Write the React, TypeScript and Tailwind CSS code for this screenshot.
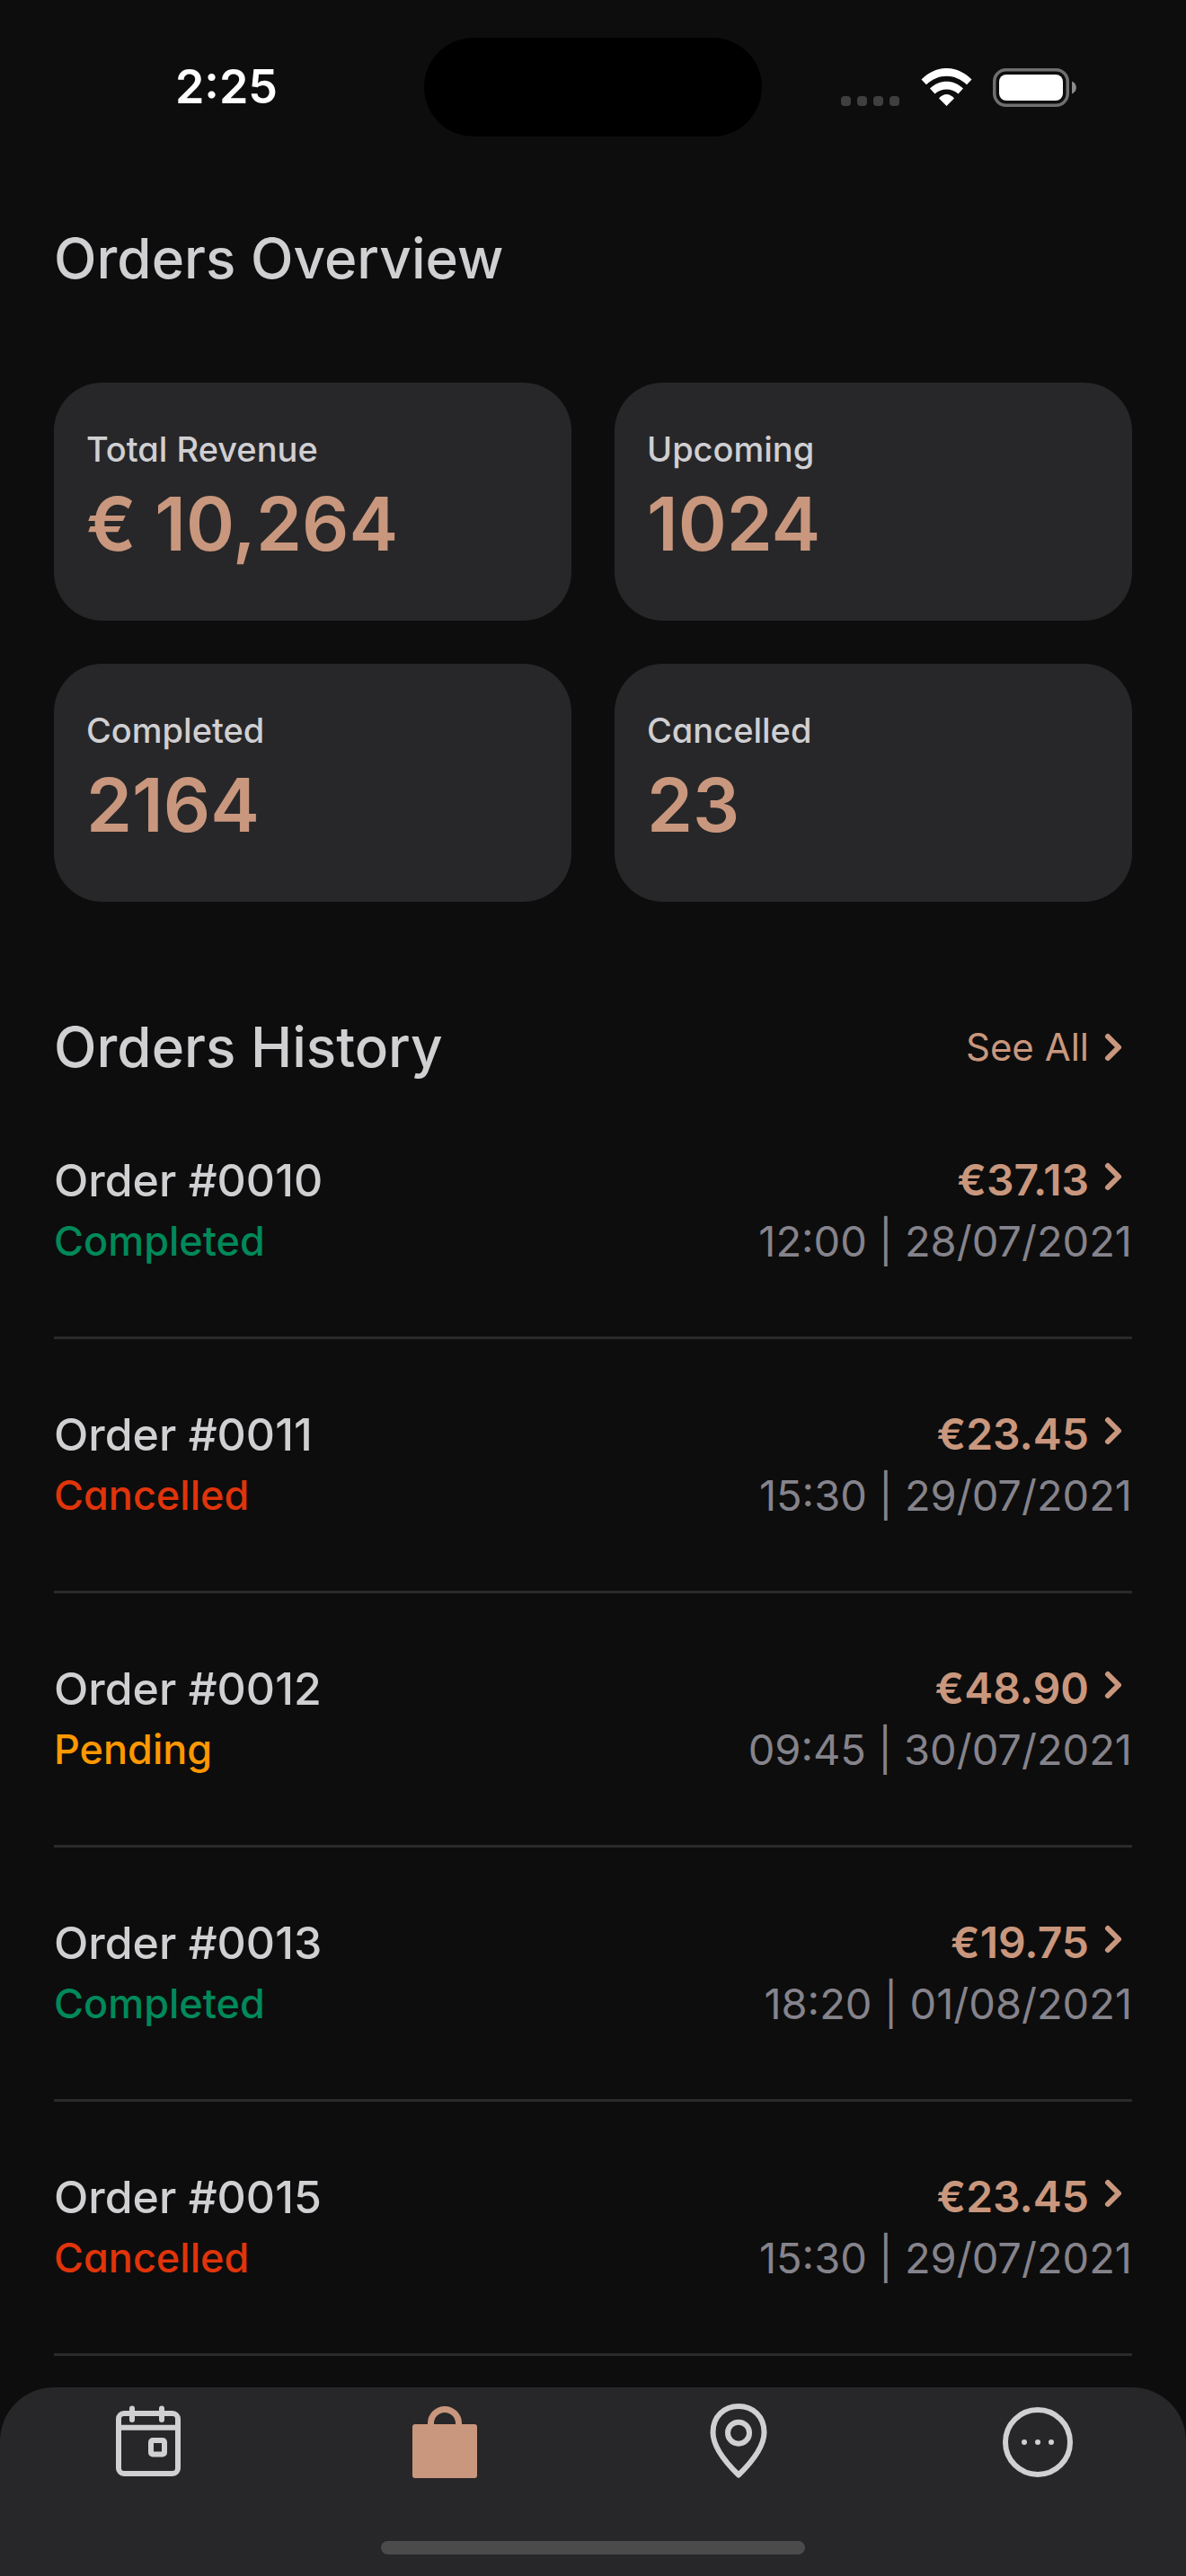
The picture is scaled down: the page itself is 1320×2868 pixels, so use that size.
import type { ReactNode } from "react";

type Status = "Completed" | "Cancelled" | "Pending";

const stats = [
  { label: "Total Revenue", value: "€ 10,264" },
  { label: "Upcoming", value: "1024" },
  { label: "Completed", value: "2164" },
  { label: "Cancelled", value: "23" },
];

const orders: { id: string; status: Status; price: string; time: string }[] = [
  { id: "0010", status: "Completed", price: "€37.13", time: "12:00 | 28/07/2021" },
  { id: "0011", status: "Cancelled", price: "€23.45", time: "15:30 | 29/07/2021" },
  { id: "0012", status: "Pending", price: "€48.90", time: "09:45 | 30/07/2021" },
  { id: "0013", status: "Completed", price: "€19.75", time: "18:20 | 01/08/2021" },
  { id: "0015", status: "Cancelled", price: "€23.45", time: "15:30 | 29/07/2021" },
];

const statusColor: Record<Status, string> = {
  Completed: "text-[#00895a]",
  Cancelled: "text-[#e0340b]",
  Pending: "text-[#ff9800]",
};

function Chevron() {
  return (
    <svg className="h-14 w-12 shrink-0" viewBox="0 0 48 56" fill="none" stroke="currentColor" strokeWidth="6" strokeLinecap="round" strokeLinejoin="round" aria-hidden="true">
      <path d="M21 16 33 28 21 40" />
    </svg>
  );
}

function StatusBar() {
  return (
    <header className="grid grid-cols-[1fr_376px_1fr] items-center pt-[42px]">
      <time className="justify-self-center pl-8 text-[52px] leading-[64px] font-semibold text-white">2:25</time>
      <div className="h-[110px] rounded-full bg-black" />
      <div className="flex items-center justify-end pr-[122px]">
        <div className="mr-6 flex gap-[7px] pt-[30px]">
          <span className="size-[11px] rounded bg-[#3f3f3f]" />
          <span className="size-[11px] rounded bg-[#3f3f3f]" />
          <span className="size-[11px] rounded bg-[#3f3f3f]" />
          <span className="size-[11px] rounded bg-[#3f3f3f]" />
        </div>
        <svg className="mr-[23px] h-[43px] w-[57px]" viewBox="0 0 57 43" fill="#fff" aria-label="Wi-Fi" role="img">
          <path d="M.5 12.5C16.5-4.2 40.5-4.2 56.5 12.5L51 18.3C38 5.5 19 5.5 6 18.3Z" />
          <path d="M10 22.5C20.5 12.1 36.5 12.1 47 22.5L41.5 28.5C34 21.8 23 21.8 15.5 28.5Z" />
          <path d="M20 33.5C25 27.5 32 27.5 37 33.5L28.5 42Z" />
        </svg>
        <svg className="h-[43px] w-[93px]" viewBox="0 0 93 43" aria-label="Battery full" role="img">
          <rect x="1.75" y="1.75" width="81.5" height="39.5" rx="13" fill="none" stroke="#6f6f6f" strokeWidth="3.5" />
          <rect x="7" y="7" width="71" height="29" rx="8" fill="#fff" />
          <path d="M88 14.5a7.5 7.5 0 0 1 0 14Z" fill="#8a8a8a" />
        </svg>
      </div>
    </header>
  );
}

function TabLink({ label, active = false, children }: { label: string; active?: boolean; children: ReactNode }) {
  return (
    <a href="#" aria-label={label} aria-current={active ? "page" : undefined} className={active ? "flex justify-center text-[#c9977d]" : "flex justify-center text-[#d0cfd2]"}>
      <svg className="size-[88px]" viewBox="0 0 88 88" fill="none" stroke="currentColor" strokeWidth="6" strokeLinecap="round" strokeLinejoin="round" aria-hidden="true">
        {children}
      </svg>
    </a>
  );
}

function TabBar() {
  return (
    <nav aria-label="Main" className="sticky bottom-0 mt-auto rounded-t-[60px] bg-[#272729] pt-4 pb-6">
      <div className="grid grid-cols-4">
        <TabLink label="Calendar">
          <rect x="11" y="13" width="66" height="67" rx="6" />
          <path d="M11 28.7H77M26 7.5V20M59 7.5V20" />
          <rect x="47" y="43" width="15" height="15.5" rx="2" />
        </TabLink>
        <TabLink label="Orders" active>
          <rect x="8" y="25" width="72" height="60" rx="3" fill="currentColor" stroke="none" />
          <path d="M28.5 27V24a15.5 15.5 0 0 1 31 0V27" strokeWidth="7" />
        </TabLink>
        <TabLink label="Locations">
          <path d="M41 81.5C26 67 12.5 49 12.5 34C12.5 16.5 25 5 41 5S69.5 16.5 69.5 34C69.5 49 56 67 41 81.5Z" />
          <circle cx="41" cy="34.7" r="12" />
        </TabLink>
        <TabLink label="More">
          <circle cx="44" cy="45" r="36" />
          <path d="M29 45h.01M44 45h.01M59 45h.01" />
        </TabLink>
      </div>
      <div className="mx-auto mt-[67px] h-[15px] w-[472px] rounded-full bg-[#4b4b4b]" />
    </nav>
  );
}

export default function App() {
  return (
    <div className="flex min-h-screen flex-col bg-[#0d0d0d] font-['Inter',sans-serif] text-[#d0cfd2] [font-feature-settings:'cv11']">
      <StatusBar />
      <main className="px-[60px] pt-[100px] pb-[35px]">
        <h1 className="text-[62px] leading-[72px] font-medium">Orders Overview</h1>
        <dl className="mt-[102px] grid grid-cols-2 gap-12">
          {stats.map((s) => (
            <div key={s.label} className="rounded-[54px] bg-[#272729] px-9 pt-[50px] pb-[59px]">
              <dt className="text-[38px] leading-[48px] font-medium">{s.label}</dt>
              <dd className="mt-3 text-[82px] leading-[96px] font-semibold text-[#c9977d]">{s.value}</dd>
            </div>
          ))}
        </dl>
        <section>
          <div className="mt-[126px] flex items-center justify-between">
            <h2 className="text-[62px] leading-[72px] font-medium">Orders History</h2>
            <a href="#" className="flex items-center text-[42px] leading-[48px] text-[#c9977d]">
              See All
              <Chevron />
            </a>
          </div>
          <ul className="mt-[6px]">
            {orders.map((o) => (
              <li key={o.id} className="border-b-[3px] border-[#2a2a2b]">
                <a href="#" className="flex justify-between py-[74px]">
                  <span className="flex flex-col gap-1 font-medium">
                    <span className="text-[50px] leading-[64px]">Order #{o.id}</span>
                    <span className={`text-[45px] leading-[64px] ${statusColor[o.status]}`}>{o.status}</span>
                  </span>
                  <span className="flex flex-col items-end gap-1">
                    <span className="flex items-start text-[48px] leading-[64px] font-semibold text-[#c9977d]">
                      {o.price}
                      <Chevron />
                    </span>
                    <span className="text-[47px] leading-[64px] font-normal text-[#85838b]">{o.time}</span>
                  </span>
                </a>
              </li>
            ))}
          </ul>
        </section>
      </main>
      <TabBar />
    </div>
  );
}
